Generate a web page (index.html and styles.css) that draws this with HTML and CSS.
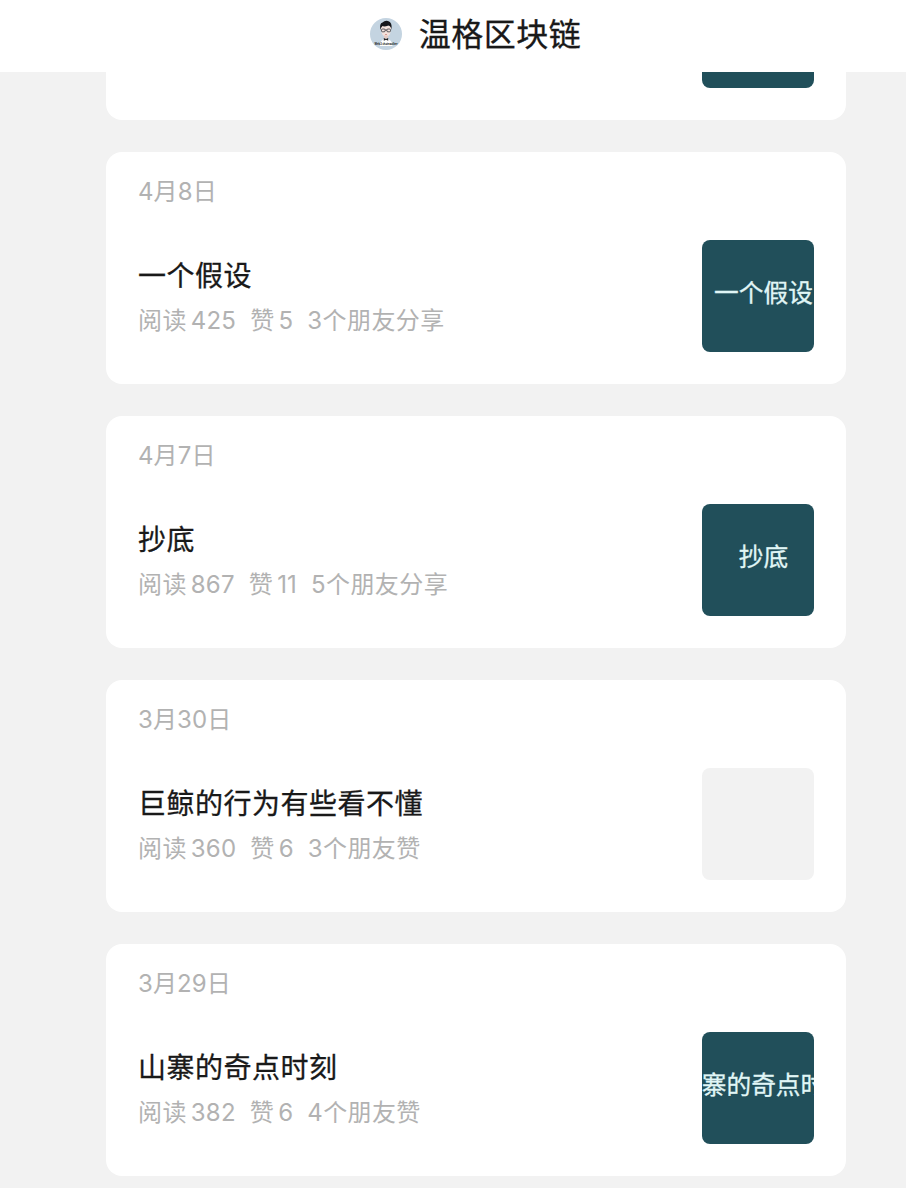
FILE: index.html
```
<!DOCTYPE html>
<html lang="zh-CN">
<head>
  <meta charset="utf-8">
  <title>温格区块链</title>
  <link rel="stylesheet" href="styles.css">
</head>
<body>
  <header class="header">
    <svg class="avatar" viewBox="0 0 32 32">
      <circle cx="16" cy="16" r="16" fill="#c4d4e1"/>
      <path d="M10 28 Q10 21 16 20.500 Q22 21 22.500 28 Z" fill="#fff"/>
      <path d="M11 8 Q10.500 18 16 19 Q21.500 18 21 8 Z" fill="#f3e2dc"/>
      <rect x="14" y="17.500" width="4" height="3" fill="#e6ccc4"/>
      <path d="M10.500 12 Q9 5.500 12.500 4.500 Q15 2 18 3 Q22.500 4 21.500 12 Q21 8 18.500 7.500 Q14 9 12.500 8 Q11 9 10.500 12 Z" fill="#15171b"/>
      <g fill="none" stroke="#33363c" stroke-width=".8">
        <rect x="11.500" y="11" width="3.600" height="2.800" rx="1"/>
        <rect x="16.900" y="11" width="3.600" height="2.800" rx="1"/>
        <path d="M15 12 H17"/>
      </g>
      <path d="M15 16.500 H17" stroke="#c87c74" stroke-width=".7"/>
      <path d="M13.800 20 L16 21 L18.200 20 V22.800 L16 21.800 L13.800 22.800 Z" fill="#222"/>
      <text class="avatar-text" x="4.500" y="26.500" textLength="23" lengthAdjust="spacingAndGlyphs">Web3 chainwalker</text>
    </svg>
    <h1 class="name">温格区块链</h1>
  </header>

  <main class="list">
    <article class="card card-cut">
      <div class="thumb"></div>
    </article>

    <article class="card">
      <div class="date">4月8日</div>
      <div class="row">
        <div class="info">
          <h2 class="title">一个假设</h2>
          <div class="meta"><span>阅读<b>425</b></span><span>赞<b>5</b></span><span>3个朋友分享</span></div>
        </div>
        <div class="thumb">一个假设</div>
      </div>
    </article>

    <article class="card">
      <div class="date">4月7日</div>
      <div class="row">
        <div class="info">
          <h2 class="title">抄底</h2>
          <div class="meta"><span>阅读<b>867</b></span><span>赞<b>11</b></span><span>5个朋友分享</span></div>
        </div>
        <div class="thumb">抄底</div>
      </div>
    </article>

    <article class="card">
      <div class="date">3月30日</div>
      <div class="row">
        <div class="info">
          <h2 class="title">巨鲸的行为有些看不懂</h2>
          <div class="meta"><span>阅读<b>360</b></span><span>赞<b>6</b></span><span>3个朋友赞</span></div>
        </div>
        <div class="thumb thumb-empty"></div>
      </div>
    </article>

    <article class="card">
      <div class="date">3月29日</div>
      <div class="row">
        <div class="info">
          <h2 class="title">山寨的奇点时刻</h2>
          <div class="meta"><span>阅读<b>382</b></span><span>赞<b>6</b></span><span>4个朋友赞</span></div>
        </div>
        <div class="thumb">山寨的奇点时刻</div>
      </div>
    </article>
  </main>
</body>
</html>
```
FILE: styles.css
```
* {
  box-sizing: border-box;
}

body {
  margin: 0;
  background-color: #f2f2f2;
  font-family: Inter, "Noto Sans CJK SC", sans-serif;
  color: #191919;
}

.header {
  display: flex;
  justify-content: center;
  align-items: center;
  gap: 17px;
  height: 72px;
  padding: 0 0 4px 45px;
  background-color: #fff;
}

.avatar {
  width: 32px;
  height: 32px;
  overflow: visible;
}

.avatar-text {
  font-size: 3px;
  font-weight: bold;
  fill: #222;
}

.name {
  margin: 0;
  padding-top: 2px;
  font-size: 32px;
  line-height: 48px;
  font-weight: normal;
  letter-spacing: 0.5px;
  -webkit-text-stroke: 0.3px #191919;
}

.list {
  display: flex;
  flex-direction: column;
  gap: 32px;
  width: 740px;
  margin-left: 106px;
}

.card {
  height: 232px;
  padding: 24px 32px 32px;
  background-color: #fff;
  border-radius: 16px;
}

.date {
  height: 32px;
  line-height: 32px;
  font-size: 24px;
  letter-spacing: 0.1px;
  color: #b2b2b2;
}

.row {
  display: flex;
  justify-content: space-between;
  align-items: center;
  height: 112px;
  margin-top: 32px;
}

.info {
  padding-top: 2px;
}

.title {
  margin: 0;
  font-size: 28px;
  line-height: 40px;
  font-weight: normal;
  letter-spacing: 0.5px;
  -webkit-text-stroke: 0.3px #191919;
}

.meta {
  display: flex;
  gap: 14px;
  margin-top: 8px;
  font-size: 24px;
  line-height: 34px;
  letter-spacing: 0.4px;
  color: #b2b2b2;
}

.meta b {
  margin-left: 4px;
  font-weight: normal;
  letter-spacing: 0.2px;
}

.thumb {
  display: flex;
  justify-content: center;
  align-items: center;
  flex-shrink: 0;
  width: 112px;
  height: 112px;
  padding: 0 0 10px 11px;
  overflow: hidden;
  border-radius: 8px;
  background-color: #214f5a;
  color: #e0f6f6;
  font-size: 24.7px;
  white-space: nowrap;
  -webkit-text-stroke: 0.3px #e0f6f6;
}

.thumb-empty {
  background-color: #f2f2f2;
}

/* card scrolled under the header, only its bottom is visible */
.card-cut {
  display: flex;
  justify-content: flex-end;
  height: 48px;
  padding-top: 0;
  border-radius: 0 0 16px 16px;
}

.card-cut .thumb {
  height: 16px;
  border-radius: 0 0 8px 8px;
}
```
